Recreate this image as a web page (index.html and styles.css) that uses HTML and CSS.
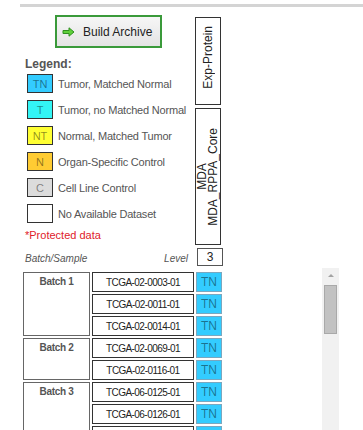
FILE: index.html
```html
<!DOCTYPE html>
<html lang="en">
<head>
    <meta charset="UTF-8">
    <title>Data Matrix - Build Archive</title>
    <link rel="stylesheet" href="styles.css">
</head>
<body>
    <div class="rule"></div>
    <div class="panel">
        <div class="top">
            <div class="side">
                <button class="build" type="button">
                    <svg class="arrow" width="13" height="10" viewBox="0 0 13 10">
                        <path d="M1 3.5 H7 V0.8 L12 5 L7 9.2 V6.5 H1 Z" fill="#5fd03a" stroke="#2f8f1f" stroke-width="1"/>
                    </svg>
                    Build Archive
                </button>
                <div class="legend-title">Legend:</div>
                <ul class="legend">
                    <li><span class="code tn">TN</span>Tumor, Matched Normal</li>
                    <li><span class="code t">T</span>Tumor, no Matched Normal</li>
                    <li><span class="code nt">NT</span>Normal, Matched Tumor</li>
                    <li><span class="code n">N</span>Organ-Specific Control</li>
                    <li><span class="code c">C</span>Cell Line Control</li>
                    <li><span class="code"></span>No Available Dataset</li>
                </ul>
                <div class="protected">*Protected data</div>
            </div>
            <div class="platforms">
                <div class="platform exp"><span>Exp-Protein</span></div>
                <div class="platform mda"><span>MDA<br>MDA_RPPA_Core</span></div>
            </div>
        </div>

        <div class="level-row">
            <div class="heads">
                <span>Batch/Sample</span>
                <span>Level</span>
            </div>
            <div class="level">3</div>
        </div>

        <div class="samples">
            <div class="grid">
                <div class="batch" style="grid-row: span 3">Batch 1</div>
                <div class="sample">TCGA-02-0003-01</div><div class="cell tn">TN</div>
                <div class="sample">TCGA-02-0011-01</div><div class="cell tn">TN</div>
                <div class="sample">TCGA-02-0014-01</div><div class="cell tn">TN</div>

                <div class="batch" style="grid-row: span 2">Batch 2</div>
                <div class="sample">TCGA-02-0069-01</div><div class="cell tn">TN</div>
                <div class="sample">TCGA-02-0116-01</div><div class="cell tn">TN</div>

                <div class="batch" style="grid-row: span 3">Batch 3</div>
                <div class="sample">TCGA-06-0125-01</div><div class="cell tn">TN</div>
                <div class="sample">TCGA-06-0126-01</div><div class="cell tn">TN</div>
                <div class="sample">TCGA-06-0137-01</div><div class="cell tn">TN</div>
            </div>
            <div class="scrollbar">
                <span class="up"></span>
                <span class="thumb"></span>
            </div>
        </div>
    </div>
</body>
</html>
```

FILE: styles.css
```css
body {
    margin: 0;
    overflow: hidden;
    background-color: #fff;
    font-family: "Liberation Sans", Arial, sans-serif;
    color: #555;
}

.rule {
    height: 3px;
    margin: 4px 0 0 20px;
    background-color: #d4d4d4;
}

.panel {
    margin-left: 23px;
}

.top {
    display: flex;
    margin-top: 8px;
}

.side {
    width: 172px;
}

.build {
    display: flex;
    align-items: center;
    gap: 8px;
    width: 107px;
    height: 33px;
    margin-left: 32px;
    padding: 0 0 0 5px;
    border: 2px solid #3a9a3a;
    background: linear-gradient(#f6f6f6, #e4e4e4);
    font-family: inherit;
    font-size: 12px;
    white-space: nowrap;
    color: #222;
    cursor: pointer;
}

.legend-title {
    margin: 9px 0 0 2px;
    font-size: 12px;
    line-height: 15px;
    font-weight: bold;
}

.legend {
    list-style: none;
    margin: 2px 0 0 4px;
    padding: 0;
}

.legend li {
    display: flex;
    align-items: center;
    height: 19px;
    margin-bottom: 7px;
    font-size: 11px;
    letter-spacing: -0.2px;
    white-space: nowrap;
}

.code {
    box-sizing: border-box;
    display: flex;
    align-items: center;
    justify-content: center;
    width: 26px;
    height: 19px;
    margin-right: 5px;
    border: 1px solid #333;
    background-color: #fff;
    font-size: 11px;
    letter-spacing: 0;
    color: rgba(0, 0, 0, 0.45);
}

.tn { background-color: #33ccff; }
.t { background-color: #33f5f5; }
.nt { background-color: #ffff33; }
.n { background-color: #ffcc33; }
.c { background-color: #dcdcdc; }

.protected {
    margin: -2px 0 0 2px;
    font-size: 11px;
    line-height: 14px;
    color: #e0202a;
}

.platforms {
    display: flex;
    flex-direction: column;
    gap: 3px;
    margin-top: 2px;
}

.platform {
    box-sizing: border-box;
    display: flex;
    align-items: center;
    justify-content: center;
    width: 26px;
    border: 1px solid #333;
    font-size: 12px;
    line-height: 11px;
    color: #222;
}

.platform span {
    writing-mode: vertical-rl;
    transform: rotate(180deg);
    text-align: center;
    white-space: nowrap;
}

.exp {
    height: 88px;
    padding-bottom: 8px;
}

.mda {
    height: 137px;
}

.level-row {
    display: flex;
    align-items: flex-end;
    margin-top: 3px;
}

.heads {
    display: flex;
    justify-content: space-between;
    width: 163px;
    margin-right: 9px;
    padding-left: 2px;
    font-size: 10px;
    font-style: italic;
    line-height: 14px;
}

.level {
    box-sizing: border-box;
    width: 26px;
    height: 18px;
    border: 1px solid #555;
    text-align: center;
    font-size: 12px;
    line-height: 16px;
    color: #222;
}

.samples {
    display: flex;
    margin-top: 6px;
}

.grid {
    display: grid;
    grid-template-columns: 67px 102px 26px;
    grid-auto-rows: 20px;
    gap: 2px;
}

.batch {
    grid-column: 1;
    border: 1px solid #666;
    padding-top: 3px;
    text-align: center;
    font-size: 10px;
    font-weight: bold;
    letter-spacing: -0.3px;
    color: #555;
}

.sample {
    grid-column: 2;
    display: flex;
    align-items: center;
    justify-content: center;
    border: 1px solid #333;
    font-size: 10px;
    letter-spacing: -0.55px;
    color: #222;
}

.cell {
    grid-column: 3;
    display: flex;
    align-items: center;
    justify-content: center;
    border: 1px solid #7aa7bf;
    font-size: 12px;
    color: rgba(0, 0, 0, 0.45);
}

.scrollbar {
    display: flex;
    flex-direction: column;
    align-items: center;
    width: 17px;
    height: 170px;
    margin: -4px 0 0 100px;
    background-color: #f1f1f1;
}

.up {
    width: 0;
    height: 0;
    margin-top: 6px;
    border-left: 3px solid transparent;
    border-right: 3px solid transparent;
    border-bottom: 3px solid #a3a3a3;
}

.thumb {
    box-sizing: border-box;
    width: 13px;
    height: 49px;
    margin-top: 8px;
    border: 1px solid #a9a9a9;
    background-color: #c2c2c2;
}
```
